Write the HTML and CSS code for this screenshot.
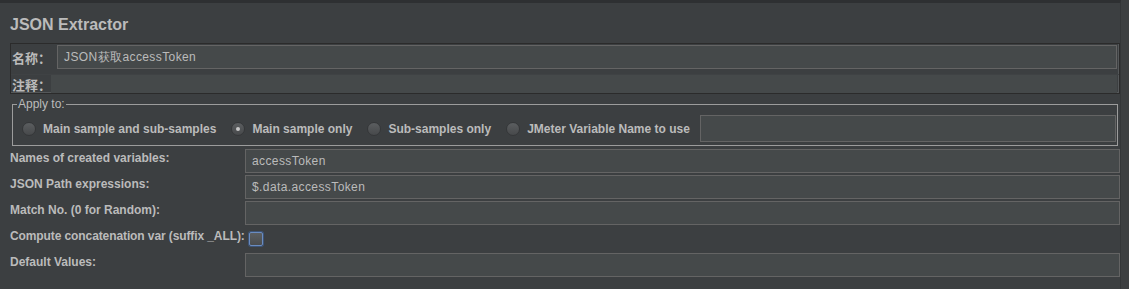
FILE: index.html
```html
<!DOCTYPE html>
<html lang="zh">

<head>
    <meta charset="UTF-8">
    <title>JSON Extractor</title>
    <link rel="stylesheet" href="styles.css">
</head>

<body>
    <div class="panel">
        <div class="title">JSON Extractor</div>

        <div class="name-box">
            <div class="name-row">
                <span class="cjk-label">名称：</span>
                <div class="field name-field">JSON获取accessToken</div>
            </div>
            <div class="comment-row">
                <span class="cjk-label">注释：</span>
                <div class="comment-field"></div>
            </div>
        </div>

        <fieldset class="apply">
            <legend>Apply to:</legend>
            <div class="radios">
                <label class="radio-item"><span class="radio"></span>Main sample and sub-samples</label>
                <label class="radio-item"><span class="radio checked"></span>Main sample only</label>
                <label class="radio-item"><span class="radio"></span>Sub-samples only</label>
                <label class="radio-item"><span class="radio"></span>JMeter Variable Name to use</label>
                <div class="field var-field"></div>
            </div>
        </fieldset>

        <div class="form">
            <div class="label">Names of created variables:</div>
            <div class="field">accessToken</div>

            <div class="label">JSON Path expressions:</div>
            <div class="field">$.data.accessToken</div>

            <div class="label">Match No. (0 for Random):</div>
            <div class="field"></div>

            <div class="label nowrap">Compute concatenation var (suffix _ALL):</div>
            <div class="check-cell"><span class="checkbox"></span></div>

            <div class="label">Default Values:</div>
            <div class="field"></div>
        </div>
    </div>
</body>

</html>
```

FILE: styles.css
```css
body {
    margin: 0;
    padding: 0;
    background-color: #3c3f41;
    font-family: "Liberation Sans", Arial, sans-serif;
    font-size: 12px;
    color: #bbbbbb;
}

.panel {
    border-top: 3px solid #2e3032;
    border-right: 1px solid #333638;
    width: 1120px;
    height: 286px;
}

.title {
    padding: 12px 0 0 10px;
    height: 28px;
    font-size: 16px;
    font-weight: bold;
    line-height: 20px;
}

.name-box {
    margin-left: 10px;
    width: 1108px;
    border: 1px solid #2b2b2b;
    box-shadow: inset -1px -1px 0 #55585a;
    padding: 1px 0 0 0;
}

.name-row {
    display: flex;
    align-items: center;
    height: 24px;
}

.cjk-label {
    font-family: "Noto Sans CJK SC", sans-serif;
    font-weight: bold;
    font-size: 13px;
    padding-left: 1px;
    width: 45px;
    flex: none;
}

.field {
    background-color: #45494a;
    border: 1px solid #646464;
    box-sizing: border-box;
    height: 24px;
    line-height: 22px;
    padding-left: 6px;
    letter-spacing: 0.4px;
}

.name-field {
    width: 1060px;
}

.comment-row {
    display: flex;
    align-items: center;
    margin-top: 5px;
    border-top: 1px solid #3f4244;
    height: 18px;
}

.comment-row .cjk-label {
    width: 39px;
}

.comment-field {
    width: 1066px;
    height: 18px;
    background-color: #45494a;
}

.apply {
    margin: 4px 0 0 12px;
    width: 1106px;
    box-sizing: border-box;
    border: 1px solid #9c9c9c;
    padding: 0 0 1px 9px;
    height: 48px;
}

.apply legend {
    padding: 0 1px;
    margin-left: -5px;
    font-size: 12px;
    line-height: 12px;
}

.radios {
    display: flex;
    align-items: center;
    margin-top: 5px;
}

.radio-item {
    display: flex;
    align-items: center;
    flex: none;
    white-space: nowrap;
    font-weight: bold;
    margin-right: 15px;
}

.radio {
    width: 14px;
    height: 14px;
    border-radius: 50%;
    box-sizing: border-box;
    background: linear-gradient(#5b5e60, #47494b);
    border: 1px solid #353739;
    margin-right: 7px;
    display: flex;
    align-items: center;
    justify-content: center;
}

.radio.checked::after {
    content: "";
    width: 4px;
    height: 4px;
    border-radius: 50%;
    background-color: #c8c8c8;
}

.var-field {
    flex: 1;
    height: 27px;
    margin: 0 1px 0 -5px;
}

.form {
    display: grid;
    grid-template-columns: 235px 875px;
    grid-auto-rows: 24px;
    row-gap: 2px;
    margin: 3px 0 0 10px;
}

.label {
    font-weight: bold;
    line-height: 16px;
    padding-top: 1px;
}

.nowrap {
    white-space: nowrap;
    letter-spacing: -0.1px;
}

.check-cell {
    display: flex;
    align-items: center;
    padding-left: 4px;
}

.checkbox {
    width: 14px;
    height: 14px;
    box-sizing: border-box;
    border-radius: 2px;
    border: 1px solid #6a8cc0;
    background: linear-gradient(#5c5f61, #4a4c4e);
    box-shadow: 0 0 0 1px #3d5477;
}
```
